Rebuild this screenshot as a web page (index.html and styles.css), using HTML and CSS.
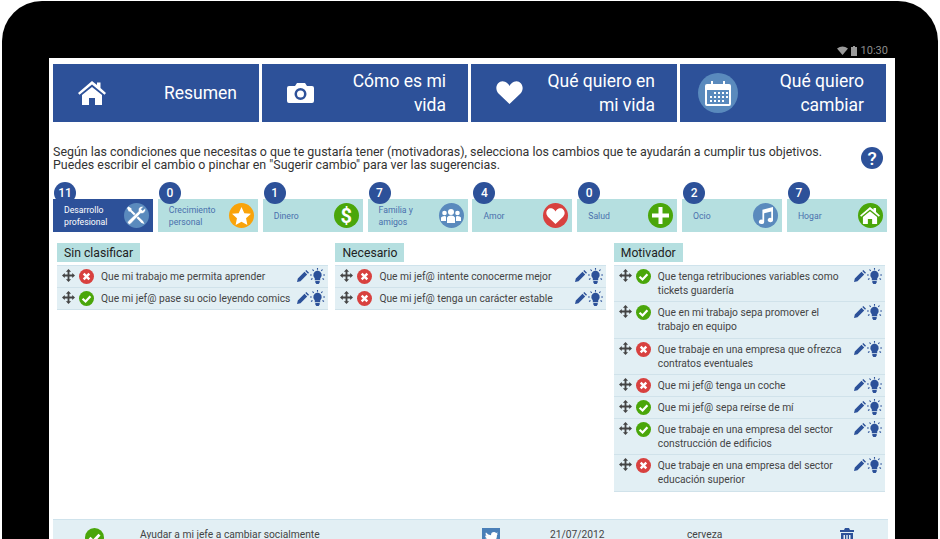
FILE: index.html
```html
<!DOCTYPE html>
<html lang="en">
<head>
    <meta charset="UTF-8">
    <meta name="viewport" content="width=device-width, initial-scale=1.0">
    <title>Qué quiero cambiar</title>
    <link rel="stylesheet" href="styles.css">
</head>
<body>

<svg class="defs" width="0" height="0">
    <symbol id="i-home" viewBox="0 0 28 24"><path d="M14 0 L19 4 V1.500 H22.500 V7 L28 12 L26.500 13.800 L14 3.500 L1.500 13.800 L0 12 Z"/><path d="M14 6 L24 14 V24 H17 V17 H11 V24 H4 V14 Z"/></symbol>
    <symbol id="i-move" viewBox="0 0 14 14"><path d="M7 0 L9.800 3 H8 V6 H11 V4.200 L14 7 L11 9.800 V8 H8 V11 H9.800 L7 14 L4.200 11 H6 V8 H3 V9.800 L0 7 L3 4.200 V6 H6 V3 H4.200 Z"/></symbol>
    <symbol id="i-ok" viewBox="0 0 16 16"><circle cx="8" cy="8" r="8" fill="#4aa60a"/><path d="M3.800 8.300 L7 11.200 L12.200 5.600" fill="none" stroke="#fff" stroke-width="2.400"/></symbol>
    <symbol id="i-no" viewBox="0 0 16 16"><circle cx="8" cy="8" r="8" fill="#d8413f"/><path d="M5 5 L11 11 M11 5 L5 11" fill="none" stroke="#fff" stroke-width="2.600"/></symbol>
    <symbol id="i-pencil" viewBox="0 0 12 12"><path d="M0 12 L0.800 8.500 L7.500 1.800 L10.200 4.500 L3.500 11.200 Z M8.300 1 L9.300 0 L12 2.700 L11 3.700 Z"/></symbol>
    <symbol id="i-bulb" viewBox="0 0 15 16"><path d="M7.500 2.500 A4.600 4.600 0 0 1 10.200 10.500 V12.300 H4.800 V10.500 A4.600 4.600 0 0 1 7.500 2.500 Z M5.300 13 H9.700 V14.500 L8.700 16 H6.300 L5.300 14.500 Z"/><path d="M7.500 0 V1.700 M2.500 1.500 L3.700 2.900 M12.500 1.500 L11.300 2.900 M0 7 H1.800 M13.200 7 H15 M1 11.500 L2.500 10.500 M14 11.500 L12.500 10.500" stroke="#2c5199" stroke-width="1.100" fill="none"/></symbol>
</svg>

<div class="device">
    <div class="status-bar">
        <svg class="status-icon" width="11" height="9" viewBox="0 0 11 9"><path d="M0 2.500 Q5.500 -1.500 11 2.500 L5.500 9 Z" fill="#9a9a9a"/></svg>
        <svg class="status-icon" width="6" height="10" viewBox="0 0 6 10"><path d="M2 0 H4 V1 H6 V10 H0 V1 H2 Z" fill="#9a9a9a"/></svg>
        <span>10:30</span>
    </div>

    <div class="screen">
        <nav class="main-nav">
            <a class="nav-tile">
                <span class="nav-icon"><svg width="28" height="24"><use href="#i-home"/></svg></span>
                <span class="nav-text">Resumen</span>
            </a>
            <a class="nav-tile">
                <span class="nav-icon"><svg width="27" height="20" viewBox="0 0 27 20"><path fill-rule="evenodd" d="M2 3 H8 L10 0 H18 L20 3 H25 Q27 3 27 5 V18 Q27 20 25 20 H2 Q0 20 0 18 V5 Q0 3 2 3 Z M13.500 5 A6 6 0 1 0 13.500 17 A6 6 0 1 0 13.500 5 Z M13.500 7.500 A3.500 3.500 0 1 1 13.500 14.500 A3.500 3.500 0 1 1 13.500 7.500 Z"/></svg></span>
                <span class="nav-text">Cómo es mi<br>vida</span>
            </a>
            <a class="nav-tile">
                <span class="nav-icon"><svg width="27" height="23" viewBox="0 0 27 23"><path d="M13.500 23 L2.500 12.500 C-3 6 3 -2 9 0.800 C11 1.700 12.500 3 13.500 5 C14.500 3 16 1.700 18 0.800 C24 -2 30 6 24.500 12.500 Z"/></svg></span>
                <span class="nav-text">Qué quiero en<br>mi vida</span>
            </a>
            <a class="nav-tile">
                <span class="nav-icon nav-icon-round"><svg width="26" height="25" viewBox="0 0 26 25"><path fill-rule="evenodd" d="M2 3 H6 V0 H8 V3 H18 V0 H20 V3 H24 Q26 3 26 5 V23 Q26 25 24 25 H2 Q0 25 0 23 V5 Q0 3 2 3 Z M2 9 V23 H24 V9 Z"/><path d="M9 11 h2 v2 h-2 z M13 11 h2 v2 h-2 z M17 11 h2 v2 h-2 z M21 11 h2 v2 h-2 z M5 15 h2 v2 h-2 z M9 15 h2 v2 h-2 z M13 15 h2 v2 h-2 z M17 15 h2 v2 h-2 z M21 15 h2 v2 h-2 z M5 19 h2 v2 h-2 z M9 19 h2 v2 h-2 z M13 19 h2 v2 h-2 z M17 19 h2 v2 h-2 z"/></svg></span>
                <span class="nav-text">Qué quiero<br>cambiar</span>
            </a>
        </nav>

        <div class="intro">
            <p>Según las condiciones que necesitas o que te gustaría tener (motivadoras), selecciona los cambios que te ayudarán a cumplir tus objetivos.<br>Puedes escribir el cambio o pinchar en "Sugerir cambio" para ver las sugerencias.</p>
            <span class="help">?</span>
        </div>

        <div class="categories">
            <div class="category active">
                <span class="badge">11</span>
                <span class="cat-label">Desarrollo<br>profesional</span>
                <span class="cat-icon c-blue"><svg width="19" height="19" viewBox="0 0 19 19"><path d="M1.500 0.500 L4.500 2.500 V4 L16 15 L17.500 18 L14.500 17 L3.200 5.500 H1.800 L0 2 Z" fill="#fff"/><path d="M18.300 2 L15.800 4.500 L14.200 3.200 L16.600 0.700 C13.600 -0.500 10.600 2 11.500 5.300 L1 15.200 Q0 16.500 1.200 17.800 Q2.500 19 3.800 17.800 L13.600 7.400 C16.800 8.300 19.500 5 18.300 2 Z" fill="#fff" stroke="#5a8abd" stroke-width="0.600"/></svg></span>
            </div>
            <div class="category">
                <span class="badge">0</span>
                <span class="cat-label">Crecimiento<br>personal</span>
                <span class="cat-icon c-orange"><svg width="19" height="18" viewBox="0 0 20 19"><path d="M10 0 L13 6.500 L20 7.200 L14.800 12 L16.200 19 L10 15.500 L3.800 19 L5.200 12 L0 7.200 L7 6.500 Z" fill="#fff"/></svg></span>
            </div>
            <div class="category">
                <span class="badge">1</span>
                <span class="cat-label">Dinero</span>
                <span class="cat-icon c-green"><span class="cat-glyph">$</span></span>
            </div>
            <div class="category">
                <span class="badge">7</span>
                <span class="cat-label">Familia y<br>amigos</span>
                <span class="cat-icon c-blue"><svg width="20" height="14" viewBox="0 0 20 14"><g fill="#fff"><circle cx="3.500" cy="4" r="2.300"/><circle cx="16.500" cy="4" r="2.300"/><circle cx="10" cy="3" r="3"/><path d="M0 12 V8.500 Q1 7 3.500 7 L5 7.500 V12 Z M20 12 V8.500 Q19 7 16.500 7 L15 7.500 V12 Z M6 14 V8.500 Q7 6.500 10 6.500 Q13 6.500 14 8.500 V14 Z"/></g></svg></span>
            </div>
            <div class="category">
                <span class="badge">4</span>
                <span class="cat-label">Amor</span>
                <span class="cat-icon c-red"><svg width="19" height="16" viewBox="0 0 27 23"><path fill="#fff" d="M13.500 23 L2.500 12.500 C-3 6 3 -2 9 0.800 C11 1.700 12.500 3 13.500 5 C14.500 3 16 1.700 18 0.800 C24 -2 30 6 24.500 12.500 Z"/></svg></span>
            </div>
            <div class="category">
                <span class="badge">0</span>
                <span class="cat-label">Salud</span>
                <span class="cat-icon c-green"><svg width="17" height="17" viewBox="0 0 17 17"><path d="M6.500 0 H10.500 V6.500 H17 V10.500 H10.500 V17 H6.500 V10.500 H0 V6.500 H6.500 Z" fill="#fff"/></svg></span>
            </div>
            <div class="category">
                <span class="badge">2</span>
                <span class="cat-label">Ocio</span>
                <span class="cat-icon c-blue"><svg width="15" height="17" viewBox="0 0 17 19"><path d="M5 3 L17 0 V14.500 A3 2.500 0 1 1 15 12.300 V5 L7 7 V16.500 A3 2.500 0 1 1 5 14.300 Z" fill="#fff"/></svg></span>
            </div>
            <div class="category">
                <span class="badge">7</span>
                <span class="cat-label">Hogar</span>
                <span class="cat-icon c-green"><svg class="white-fill" width="20" height="17"><use href="#i-home"/></svg></span>
            </div>
        </div>

        <div class="columns">
            <section class="column">
                <h3>Sin clasificar</h3>
                <ul class="changes">
                    <li><svg class="move"><use href="#i-move"/></svg><svg class="state"><use href="#i-no"/></svg><span class="change-text">Que mi trabajo me permita aprender</span><span class="actions"><svg class="pencil"><use href="#i-pencil"/></svg><svg class="bulb"><use href="#i-bulb"/></svg></span></li>
                    <li><svg class="move"><use href="#i-move"/></svg><svg class="state"><use href="#i-ok"/></svg><span class="change-text">Que mi jef@ pase su ocio leyendo comics</span><span class="actions"><svg class="pencil"><use href="#i-pencil"/></svg><svg class="bulb"><use href="#i-bulb"/></svg></span></li>
                </ul>
            </section>
            <section class="column">
                <h3>Necesario</h3>
                <ul class="changes">
                    <li><svg class="move"><use href="#i-move"/></svg><svg class="state"><use href="#i-no"/></svg><span class="change-text">Que mi jef@ intente conocerme mejor</span><span class="actions"><svg class="pencil"><use href="#i-pencil"/></svg><svg class="bulb"><use href="#i-bulb"/></svg></span></li>
                    <li><svg class="move"><use href="#i-move"/></svg><svg class="state"><use href="#i-no"/></svg><span class="change-text">Que mi jef@ tenga un carácter estable</span><span class="actions"><svg class="pencil"><use href="#i-pencil"/></svg><svg class="bulb"><use href="#i-bulb"/></svg></span></li>
                </ul>
            </section>
            <section class="column">
                <h3>Motivador</h3>
                <ul class="changes">
                    <li><svg class="move"><use href="#i-move"/></svg><svg class="state"><use href="#i-ok"/></svg><span class="change-text">Que tenga retribuciones variables como<br>tickets guardería</span><span class="actions"><svg class="pencil"><use href="#i-pencil"/></svg><svg class="bulb"><use href="#i-bulb"/></svg></span></li>
                    <li><svg class="move"><use href="#i-move"/></svg><svg class="state"><use href="#i-ok"/></svg><span class="change-text">Que en mi trabajo sepa promover el<br>trabajo en equipo</span><span class="actions"><svg class="pencil"><use href="#i-pencil"/></svg><svg class="bulb"><use href="#i-bulb"/></svg></span></li>
                    <li><svg class="move"><use href="#i-move"/></svg><svg class="state"><use href="#i-no"/></svg><span class="change-text">Que trabaje en una empresa que ofrezca<br>contratos eventuales</span><span class="actions"><svg class="pencil"><use href="#i-pencil"/></svg><svg class="bulb"><use href="#i-bulb"/></svg></span></li>
                    <li><svg class="move"><use href="#i-move"/></svg><svg class="state"><use href="#i-no"/></svg><span class="change-text">Que mi jef@ tenga un coche</span><span class="actions"><svg class="pencil"><use href="#i-pencil"/></svg><svg class="bulb"><use href="#i-bulb"/></svg></span></li>
                    <li><svg class="move"><use href="#i-move"/></svg><svg class="state"><use href="#i-ok"/></svg><span class="change-text">Que mi jef@ sepa reírse de mí</span><span class="actions"><svg class="pencil"><use href="#i-pencil"/></svg><svg class="bulb"><use href="#i-bulb"/></svg></span></li>
                    <li><svg class="move"><use href="#i-move"/></svg><svg class="state"><use href="#i-ok"/></svg><span class="change-text">Que trabaje en una empresa del sector<br>construcción de edificios</span><span class="actions"><svg class="pencil"><use href="#i-pencil"/></svg><svg class="bulb"><use href="#i-bulb"/></svg></span></li>
                    <li><svg class="move"><use href="#i-move"/></svg><svg class="state"><use href="#i-no"/></svg><span class="change-text">Que trabaje en una empresa del sector<br>educación superior</span><span class="actions"><svg class="pencil"><use href="#i-pencil"/></svg><svg class="bulb"><use href="#i-bulb"/></svg></span></li>
                </ul>
            </section>
        </div>

        <div class="history-row">
            <svg class="history-ok"><use href="#i-ok"/></svg>
            <span class="history-text">Ayudar a mi jefe a cambiar socialmente</span>
            <span class="history-tw"><svg width="14" height="11" viewBox="0 0 14 11"><path d="M0 9.500 Q3 10 4.500 8.500 Q2 8 1.500 6.500 H3 Q1 5.500 1 3.500 L2.500 4 Q1 2 2 0.500 Q4 3 7 3.300 Q7 0 10 0 Q11.500 0 12 1 L13.800 0.500 L12.800 2 L14 1.800 L13 3 Q13 10.500 5 11 Q2 11 0 9.500 Z" fill="#fff"/></svg></span>
            <span class="history-date">21/07/2012</span>
            <span class="history-tag">cerveza</span>
            <svg class="history-trash" width="14" height="16" viewBox="0 0 14 16"><path fill-rule="evenodd" d="M5 0 H9 L10 2 H14 V4 H0 V2 H4 Z M1 5 H13 V16 H1 Z M3.500 7 V14 H5 V7 Z M6.300 7 V14 H7.700 V7 Z M9 7 V14 H10.500 V7 Z" fill="#2c5199"/></svg>
        </div>
    </div>
</div>

</body>
</html>
```

FILE: styles.css
```css
html, body {
    margin: 0;
    height: 539px;
    overflow: hidden;
    background-color: #fff;
}
body {
    font-family: Roboto, "Liberation Sans", sans-serif;
    color: #333;
}
.defs {
    display: block;
    height: 0;
}
.device {
    margin: 1px 0 0 2px;
    width: 936px;
    height: 538px;
    overflow: hidden;
    background-color: #000;
    border-radius: 40px 40px 0 0;
}
.status-bar {
    height: 57px;
    box-sizing: border-box;
    padding: 42px 50px 0 0;
    display: flex;
    justify-content: flex-end;
    align-items: center;
    gap: 3px;
    font-size: 11px;
    color: #8c8c8c;
}
.status-bar span {
    margin-left: 1px;
}
.screen {
    margin-left: 47px;
    width: 846px;
    height: 481px;
    box-sizing: border-box;
    padding: 6px 4px 0;
    background-color: #fff;
}

/* top navigation */
.main-nav {
    display: flex;
    gap: 3px;
}
.nav-tile {
    width: 206px;
    height: 58px;
    box-sizing: border-box;
    padding: 0 22px 1px 25px;
    display: flex;
    align-items: center;
    justify-content: space-between;
    background-color: #2d5199;
    color: #fff;
}
.nav-icon {
    display: flex;
    align-items: center;
    justify-content: center;
    fill: #fff;
}
.nav-icon-round {
    width: 40px;
    height: 40px;
    margin: 1px 0 0 -7px;
    border-radius: 50%;
    background-color: #5a8abd;
}
.nav-text {
    font-size: 17.5px;
    line-height: 24px;
    text-align: right;
}

/* intro */
.intro {
    margin-top: 23px;
    display: flex;
    align-items: center;
    justify-content: space-between;
    padding-right: 8px;
}
.intro p {
    margin: 0;
    font-size: 12.43px;
    line-height: 13px;
    color: #333;
}
.help {
    width: 22px;
    height: 22px;
    border-radius: 50%;
    background-color: #2d5199;
    color: #fff;
    font-size: 19px;
    font-weight: 500;
    line-height: 23px;
    text-align: center;
}

/* categories */
.categories {
    margin-top: 28px;
    display: flex;
    gap: 4.85px;
}
.category {
    position: relative;
    width: 100px;
    height: 33px;
    box-sizing: border-box;
    padding: 0 4px 0 11px;
    display: flex;
    align-items: center;
    justify-content: space-between;
    background-color: #b5dfe0;
    color: #4a70ad;
    font-size: 8.7px;
    line-height: 12px;
}
.category.active {
    background-color: #2d5199;
    color: #fff;
}
.badge {
    position: absolute;
    left: 1px;
    top: -17px;
    width: 22px;
    height: 22px;
    border-radius: 50%;
    background-color: #2d5199;
    color: #fff;
    font-size: 12px;
    font-weight: 500;
    line-height: 22px;
    text-align: center;
}
.cat-icon {
    width: 25px;
    height: 25px;
    border-radius: 50%;
    display: flex;
    align-items: center;
    justify-content: center;
}
.cat-glyph {
    color: #fff;
    font-size: 20px;
    font-weight: bold;
}
.white-fill {
    fill: #fff;
}
.c-blue { background-color: #5a8abd; }
.c-orange { background-color: #f9a30a; }
.c-green { background-color: #4aa60a; }
.c-red { background-color: #d8413f; }

/* columns */
.columns {
    margin-top: 11px;
    padding-left: 4px;
    display: flex;
    gap: 7.4px;
    height: 276px;
}
.column {
    width: 271px;
}
.column h3 {
    display: block;
    width: fit-content;
    margin: 0 0 3px;
    padding: 0 7px;
    height: 19px;
    background-color: #b5dfe0;
    font-size: 12.2px;
    font-weight: 400;
    line-height: 20px;
    color: #222;
}
.changes {
    list-style: none;
    margin: 0;
    padding: 0;
    border-top: 1px solid #cfe3ec;
    background-color: #e2eff4;
}
.changes li {
    display: flex;
    align-items: flex-start;
    padding: 4px 3px 3px 5px;
    border-bottom: 1px solid #d0e2ea;
    font-size: 10.25px;
    line-height: 14.13px;
    color: #444;
}
.move {
    width: 13px;
    height: 13px;
    margin-top: -1px;
    fill: #444;
    flex: none;
}
.state {
    width: 15px;
    height: 15px;
    margin: -1px 7px -1px 4px;
    flex: none;
}
.change-text {
    flex: 1;
}
.actions {
    display: flex;
    align-items: flex-start;
    gap: 1px;
}
.pencil {
    width: 12px;
    height: 12px;
    fill: #2c5199;
}
.bulb {
    width: 15px;
    height: 16px;
    margin: -2px 0 0;
    fill: #2c5199;
}

/* bottom row */
.history-row {
    height: 40px;
    border-top: 1px solid #cfe3ec;
    background-color: #e2eff4;
    display: flex;
    align-items: flex-start;
    padding-top: 8px;
    font-size: 10.25px;
    line-height: 14px;
    color: #444;
    box-sizing: border-box;
    width: 835px;
}
.history-ok {
    width: 19px;
    height: 19px;
    margin-left: 32px;
}
.history-text {
    margin-left: 36px;
    width: 342px;
}
.history-tw {
    width: 18px;
    height: 18px;
    background-color: #4a7fb8;
    display: flex;
    align-items: center;
    justify-content: center;
}
.history-date {
    margin-left: 50px;
    width: 137px;
}
.history-tag {
    width: 153px;
}
```
